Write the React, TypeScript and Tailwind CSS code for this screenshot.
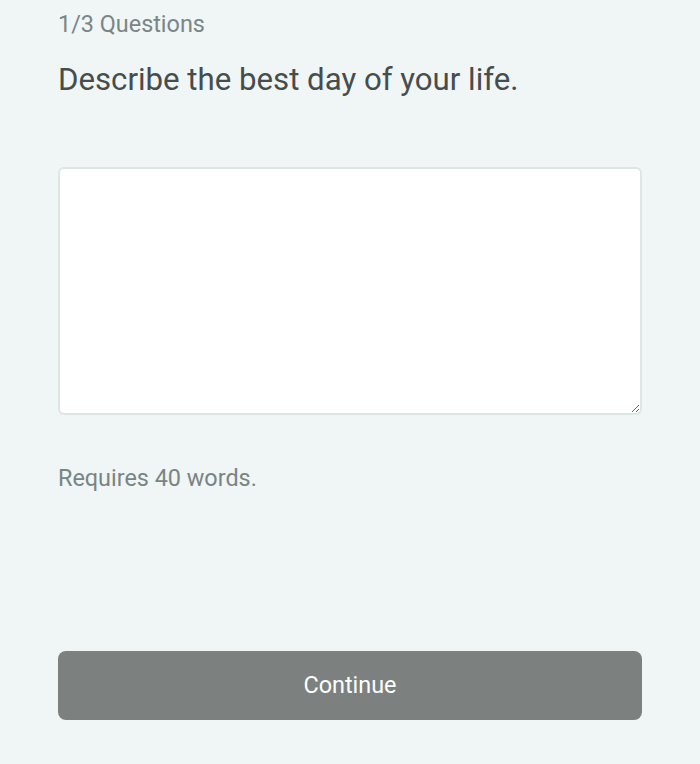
export default function App() {
  return (
    <div className="min-h-[764px] w-full bg-[#f0f5f5] font-['Roboto',sans-serif]">
      <div className="mx-[58px] flex flex-col">
        <p className="pt-[9px] text-[23.4px] leading-[30px] text-[#7b8585]">1/3 Questions</p>
        <h1 className="mt-[21px] text-[31.2px] leading-[40px] text-[#464d4d]">
          Describe the best day of your life.
        </h1>
        <textarea className="mt-[67px] h-[248px] w-full resize-y rounded-[6px] border-2 border-[#dde5e5] bg-white p-3 text-[20px] text-[#434a4a] outline-none" />
        <p className="mt-[48px] text-[23.4px] leading-[30px] text-[#7b8484]">Requires 40 words.</p>
        <button
          type="button"
          className="mt-[158px] flex h-[69px] w-full items-center justify-center rounded-[8px] bg-[#7c817f] text-[23.4px] text-white"
        >
          Continue
        </button>
      </div>
    </div>
  );
}
